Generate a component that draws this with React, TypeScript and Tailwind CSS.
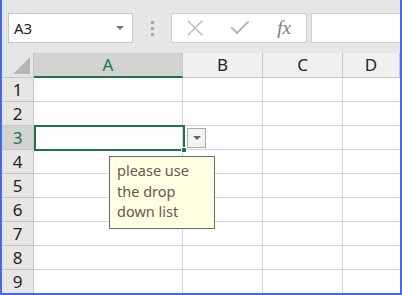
import React from 'react';
import { X, Check } from 'lucide-react';

const rows = [1, 2, 3, 4, 5, 6, 7, 8, 9];
const cols = ['A', 'B', 'C', 'D'];

const App: React.FC = () => {
  return (
    <div
      className="relative w-[402px] h-[295px] overflow-hidden bg-white border-l-2 border-r-2 border-b-2 border-[#4169e8]"
      style={{ fontFamily: '"Noto Sans", "Open Sans", sans-serif' }}
    >
      {/* formula bar */}
      <div className="h-[53px] bg-[#e6e6e6] pt-[13px] flex items-start">
        <div className="ml-[6px] w-[125px] h-[30px] bg-white border border-[#c6c6c6] flex items-center justify-between pl-[5px] pr-[8px]">
          <span className="text-[15px] text-[#222]">A3</span>
          <span className="w-0 h-0 border-l-[4px] border-r-[4px] border-t-[4px] border-l-transparent border-r-transparent border-t-[#777]" />
        </div>
        <div className="w-[38px] h-[30px] flex flex-col items-center justify-center gap-[3px]">
          <span className="w-[3px] h-[3px] bg-[#a6a6a6]" />
          <span className="w-[3px] h-[3px] bg-[#a6a6a6]" />
          <span className="w-[3px] h-[3px] bg-[#a6a6a6]" />
        </div>
        <div className="w-[136px] h-[30px] bg-white border border-[#d0d0d0] flex items-center">
          <div className="w-[45px] flex justify-center">
            <X size={28} strokeWidth={1} color="#b4b4b4" />
          </div>
          <div className="w-[45px] flex justify-center">
            <Check size={24} strokeWidth={1.8} color="#b4b4b4" />
          </div>
          <div className="w-[44px] flex justify-center">
            <span className="text-[19px] italic text-[#7a7a7a]" style={{ fontFamily: '"Liberation Serif", serif' }}>
              fx
            </span>
          </div>
        </div>
        <div className="ml-[4px] flex-1 h-[30px] bg-white border-t border-b border-l border-[#d0d0d0]" />
      </div>

      {/* grid */}
      <div className="grid grid-cols-[32px_149px_80px_80px_1fr] grid-rows-[25px_repeat(9,24px)]">
        <div className="relative bg-[#e6e6e6] border-r border-b border-[#c6c6c6]">
          <svg className="absolute right-[3px] bottom-[3px]" width="17" height="17" viewBox="0 0 17 17">
            <polygon points="17,0 17,17 0,17" fill="#b6b6b6" />
          </svg>
        </div>
        {cols.map((c) =>
          c === 'A' ? (
            <div
              key={c}
              className="bg-[#d3d3d3] border-r border-[#c6c6c6] border-b-2 border-b-[#217346] flex items-center justify-center text-[17px] text-[#217346]"
            >
              {c}
            </div>
          ) : (
            <div
              key={c}
              className="bg-[#f0f0f0] border-r border-b border-[#c6c6c6] flex items-center justify-center text-[17px] text-[#222]"
            >
              {c}
            </div>
          )
        )}
        {rows.map((r) => (
          <React.Fragment key={r}>
            <div
              className={
                r === 3
                  ? 'bg-[#d3d3d3] border-r border-b border-[#c6c6c6] flex items-center justify-center text-[17px] text-[#217346]'
                  : 'bg-[#e6e6e6] border-r border-b border-[#c6c6c6] flex items-center justify-center text-[17px] text-[#222]'
              }
            >
              {r}
            </div>
            <div className="border-r border-b border-[#d4d4d4]" />
            <div className="border-r border-b border-[#d4d4d4]" />
            <div className="border-r border-b border-[#d4d4d4]" />
            <div className="border-b border-[#d4d4d4]" />
          </React.Fragment>
        ))}
      </div>

      {/* selected cell A3 */}
      <div className="absolute left-[32px] top-[125px] w-[151px] h-[26px] border-2 border-[#217346]" />
      <div className="absolute left-[179px] top-[147px] w-[6px] h-[6px] bg-[#217346] border border-white" />

      {/* dropdown button */}
      <div className="absolute left-[185px] top-[128px] w-[19px] h-[20px] bg-[#f3f3f3] border border-[#ababab] flex items-center justify-center">
        <span className="w-0 h-0 border-l-[4px] border-r-[4px] border-t-[4px] border-l-transparent border-r-transparent border-t-[#666]" />
      </div>

      {/* input message */}
      <div className="absolute left-[107px] top-[156px] w-[106px] h-[73px] bg-[#ffffe1] border border-[#6a6a6a] pl-[7px] pt-[3px] text-[14.5px] leading-[20.5px] text-[#5e5a55]">
        <div>please use</div>
        <div>the drop</div>
        <div>down list</div>
      </div>
    </div>
  );
};

export default App;
